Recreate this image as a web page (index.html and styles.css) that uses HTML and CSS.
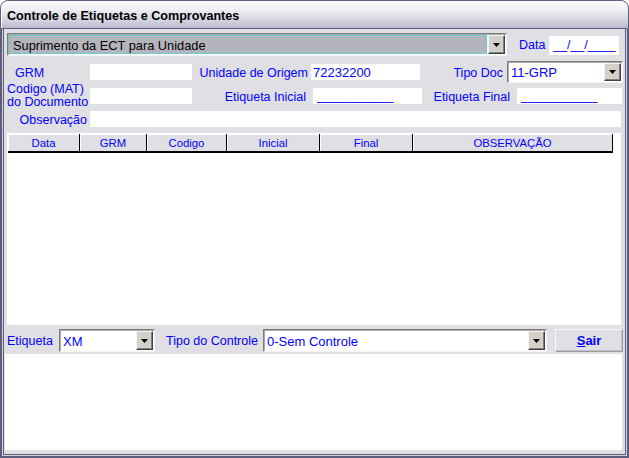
FILE: index.html
```html
<!DOCTYPE html>
<html>
<head>
<meta charset="utf-8">
<link rel="stylesheet" href="styles.css">
</head>
<body>
<div class="window">
  <div class="titlebar"><span class="title">Controle de Etiquetas e Comprovantes</span></div>
  <div class="frame1"><div class="frame2"><div class="client">

    <div class="row r1">
      <div class="combo main">
        <div class="combo-text focus">Suprimento da ECT para Unidade</div>
        <div class="drop"><svg width="7" height="4" viewBox="0 0 7 4"><polygon points="0,0 7,0 3.5,4" fill="#000"/></svg></div>
      </div>
      <span class="lbl data-lbl">Data</span>
      <div class="field data-field">__/__/____</div>
    </div>

    <div class="row r2">
      <span class="lbl col1 grm-lbl">GRM</span>
      <div class="field w102"></div>
      <span class="lbl right w116">Unidade de Origem</span>
      <div class="field w109 ml3">72232200</div>
      <span class="lbl right w83">Tipo Doc</span>
      <div class="combo tipo">
        <div class="combo-text">11-GRP</div>
        <div class="drop"><svg width="7" height="4" viewBox="0 0 7 4"><polygon points="0,0 7,0 3.5,4" fill="#000"/></svg></div>
      </div>
    </div>

    <div class="row r3">
      <span class="lbl col1 twoline">Codigo (MAT)<br>do Documento</span>
      <div class="field w102"></div>
      <span class="lbl right w114">Etiqueta Inicial</span>
      <div class="field w109 ml7 uline">___________</div>
      <span class="lbl right w88">Etiqueta Final</span>
      <div class="field w105 ml7 uline">___________</div>
    </div>

    <div class="row r4">
      <span class="lbl right col1obs">Observação</span>
      <div class="field obs"></div>
    </div>

    <div class="grid">
      <div class="ghead">
        <div class="gcell c1">Data</div>
        <div class="gcell c2">GRM</div>
        <div class="gcell c3">Codigo</div>
        <div class="gcell c4">Inicial</div>
        <div class="gcell c5">Final</div>
        <div class="gcell c6">OBSERVAÇÃO</div>
      </div>
    </div>

    <div class="row r5">
      <span class="lbl etq-lbl">Etiqueta</span>
      <div class="combo etq">
        <div class="combo-text">XM</div>
        <div class="drop"><svg width="7" height="4" viewBox="0 0 7 4"><polygon points="0,0 7,0 3.5,4" fill="#000"/></svg></div>
      </div>
      <span class="lbl ctrl-lbl">Tipo do Controle</span>
      <div class="combo ctrl">
        <div class="combo-text">0-Sem Controle</div>
        <div class="drop"><svg width="7" height="4" viewBox="0 0 7 4"><polygon points="0,0 7,0 3.5,4" fill="#000"/></svg></div>
      </div>
      <div class="btn"><span class="u">S</span>air</div>
    </div>

    <div class="panel"></div>

  </div></div></div>
</div>
</body>
</html>
```
FILE: styles.css
```css
* { box-sizing: border-box; }
body {
  margin: 0;
  background: #ffffff;
  font-family: "Liberation Sans", Arial, sans-serif;
  font-size: 12.5px;
}
.window {
  width: 629px;
  height: 458px;
  display: flex;
  flex-direction: column;
}
.titlebar {
  height: 29px;
  border: 1px solid #5e5e7c;
  border-radius: 8px 8px 0 0;
  background: linear-gradient(to bottom, #fdfdfe 0%, #f0f0f5 30%, #d6d6e2 70%, #b9b9cb 100%);
  padding: 8px 0 0 6px;
  box-shadow: inset 1px 1px 0 #ffffff;
}
.title {
  font-weight: bold;
  font-size: 12.6px;
  color: #000;
}
.frame1 {
  flex: 1;
  display: flex;
  border: solid #5e5e7c;
  border-width: 0 2px 2px 2px;
}
.frame2 {
  flex: 1;
  display: flex;
  border: solid #d2d2de;
  border-width: 0 1px 1px 1px;
}
.client {
  flex: 1;
  display: flex;
  flex-direction: column;
  border: solid #5e5e7c;
  border-width: 0 1px 1px 1px;
  background: #e0dfe3;
  padding: 4px 0 0 3px;
}
.row {
  display: flex;
  align-items: center;
}
.lbl {
  color: #0000ff;
  white-space: nowrap;
  padding-top: 1px;
}
.right { text-align: right; }
.field {
  background: #ffffff;
  height: 16px;
  line-height: 17px;
  color: #0000ff;
  font-size: 13px;
  padding-left: 2px;
  white-space: nowrap;
  overflow: hidden;
}
.uline { padding-left: 4px; font-size: 12.5px; }

/* combos */
.combo {
  display: flex;
  background: #ffffff;
  border: 1px solid;
  border-color: #7c7c7c #f4f4f4 #f4f4f4 #7c7c7c;
  box-shadow: inset 1px 1px 0 #a8a8a8;
  padding: 1px 1px 1px 1px;
}
.combo-text {
  flex: 1;
  display: flex;
  align-items: center;
  padding-left: 2px;
  padding-top: 1px;
  color: #0000ff;
  font-size: 13px;
  white-space: nowrap;
  overflow: hidden;
}
.combo-text.focus {
  background: #b4b4bc;
  color: #000;
  border: 1px dotted #22e6e6;
  margin: 0 1px 0 0;
  font-size: 12.8px;
}
.drop {
  width: 17px;
  background: #d4d0c8;
  border: 1px solid;
  border-color: #f4f4f4 #404040 #404040 #f4f4f4;
  box-shadow: inset -1px -1px 0 #808080;
  display: flex;
  align-items: center;
  justify-content: center;
}

/* row 1 */
.r1 { height: 23px; }
.combo.main { width: 500px; height: 23px; }
.combo.main .combo-text { padding-left: 3px; }
.data-lbl { margin-left: 12px; width: 30px; }
.data-field { width: 70px; height: 19px; line-height: 19px; margin-top: 1px; padding-left: 4px; font-size: 12.5px; }

/* row 2 */
.r2 { height: 22px; margin-top: 5px; }
.col1 { width: 83px; }
.grm-lbl { padding-left: 8px; }
.w102 { width: 102px; }
.w116 { width: 116px; }
.w109 { width: 109px; }
.w114 { width: 114px; }
.w88 { width: 88px; }
.w83 { width: 83px; }
.w105 { width: 105px; }
.ml3 { margin-left: 3px; }
.ml7 { margin-left: 7px; }
.combo.tipo { width: 116px; height: 22px; margin-left: 4px; }

/* row 3 */
.r3 { height: 24px; margin-top: 1px; }
.twoline { line-height: 13px; text-align: left; padding-top: 0; }

/* row 4 */
.r4 { height: 16px; margin-top: 3px; }
.col1obs { width: 80px; margin-right: 3px; }
.obs { width: 531px; }

/* grid */
.grid {
  width: 614px;
  height: 192px;
  margin-top: 6px;
  background: #ffffff;
  padding: 1px 0 0 1px;
}
.ghead {
  display: flex;
  height: 19px;
  width: 605px;
}
.gcell {
  height: 19px;
  background: #e0dfe3;
  border-right: 1px solid #000;
  border-bottom: 2px solid #000;
  box-shadow: inset 1px 1px 0 #ffffff;
  color: #0000ff;
  font-size: 11.3px;
  text-align: center;
  line-height: 18px;
}
.c1 { width: 72px; }
.c2 { width: 67px; }
.c3 { width: 80px; }
.c4 { width: 93px; }
.c5 { width: 93px; }
.c6 { width: 200px; }

/* row 5 */
.r5 { height: 23px; margin-top: 4px; }
.etq-lbl { width: 52px; }
.combo.etq { width: 96px; height: 23px; }
.ctrl-lbl { margin-left: 11px; width: 97px; }
.combo.ctrl { width: 284px; height: 23px; }
.btn {
  width: 68px;
  height: 23px;
  margin-left: 8px;
  background: #e0dfe3;
  border: 1px solid;
  border-color: #f8f8f8 #9a9a9a #9a9a9a #f8f8f8;
  box-shadow: inset -1px -1px 0 #c0c0c8;
  color: #0000ff;
  font-weight: bold;
  font-size: 13px;
  text-align: center;
  line-height: 22px;
}
.u { text-decoration: underline; }

/* bottom panel */
.panel {
  width: 617px;
  height: 96px;
  margin-top: 2px;
  margin-left: -2px;
  background: #ffffff;
}
```
